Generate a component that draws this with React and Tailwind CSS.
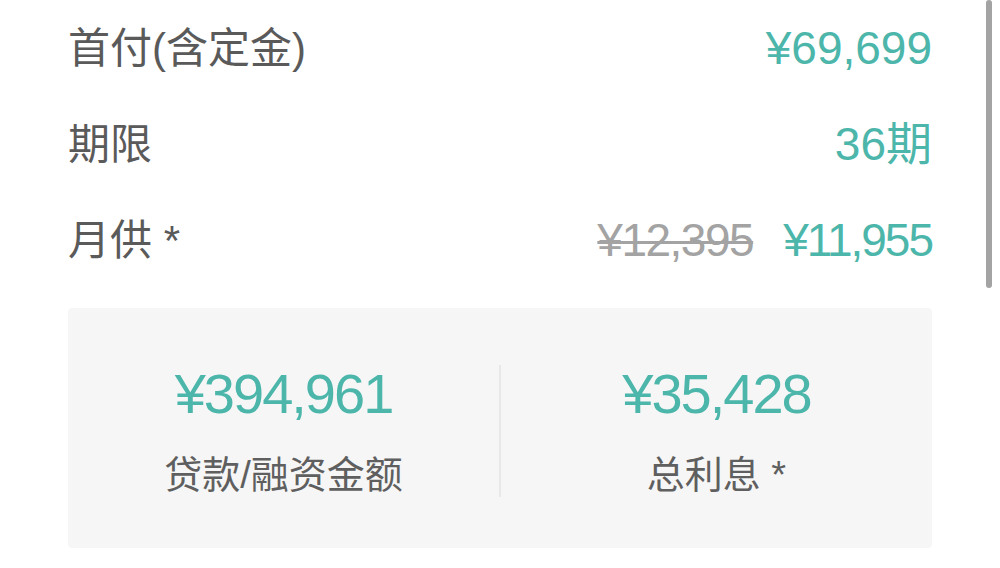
const Row = ({label, children}) => {
  return (
    <div className="flex h-[96px] items-center justify-between">
      <div className="text-[42px] text-[#5a5a5a]">{label}</div>
      <div className="flex items-center gap-[30px] text-[46px]">{children}</div>
    </div>
  );
};

const Stat = ({value, label}) => {
  return (
    <div className="flex flex-1 flex-col items-center">
      <div className="mt-[54px] h-[64px] text-[56px] leading-[64px] tracking-[-2px] text-[#4db6ab]">
        {value}
      </div>
      <div className="mt-[26px] h-[46px] text-[38px] leading-[46px] text-[#5f5f5f]">
        {label}
      </div>
    </div>
  );
};

const App = () => {
  return (
    <div
      className="relative h-[568px] w-full overflow-hidden bg-white px-[68px]"
      style={{fontFamily: '"Liberation Sans", "Noto Sans CJK SC", sans-serif'}}
    >
      <Row label="首付(含定金)">
        <span className="text-[#4db6ab]">¥69,699</span>
      </Row>
      <Row label="期限">
        <span className="text-[#4db6ab]">36期</span>
      </Row>
      <Row label="月供 *">
        <span className="tracking-[-1.5px] text-[#a3a3a3] line-through decoration-[3px]">¥12,395</span>
        <span className="tracking-[-2px] text-[#4db6ab]">¥11,955</span>
      </Row>

      <div className="mt-[20px] flex h-[240px] rounded bg-[#f6f6f6]">
        <Stat value="¥394,961" label="贷款/融资金额" />
        <div className="mt-[57px] h-[132px] w-[2px] bg-[#e8e8e8]" />
        <Stat value="¥35,428" label="总利息 *" />
      </div>

      {/* scrollbar */}
      <div className="absolute left-[986px] top-0 h-[288px] w-[6px] rounded-full bg-[#a3a3a3]" />
    </div>
  );
};

export default App;
